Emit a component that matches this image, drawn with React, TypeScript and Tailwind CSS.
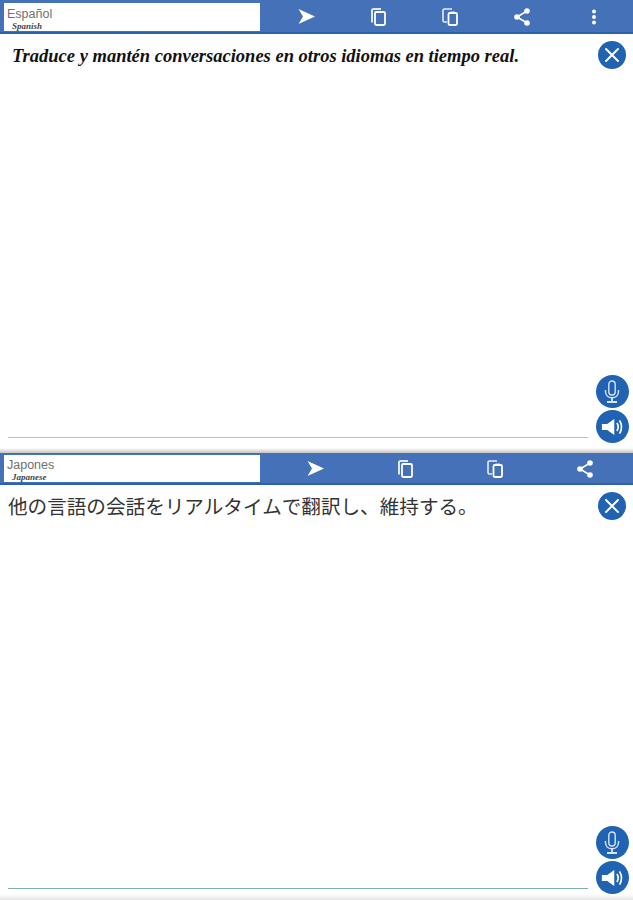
const BLUE = "bg-[#4471b7]";

function SendIcon() {
  return (
    <svg width="17" height="15" viewBox="0 0 17 15" fill="#fff">
      <path d="M0.5 0 L17 7.5 L0.5 15 L5 7.5 Z" />
    </svg>
  );
}

function CopyIcon() {
  return (
    <svg width="16" height="18" viewBox="0 0 16 18" fill="none">
      <path d="M2 14.5 V2.5 C2 1.6 2.6 1 3.5 1 H11" stroke="#dfe8f5" strokeWidth="2" />
      <rect x="5" y="4" width="10" height="13" rx="1.2" stroke="#fff" strokeWidth="1.8" />
    </svg>
  );
}

function PasteIcon() {
  return (
    <svg width="16" height="18" viewBox="0 0 16 18" fill="none">
      <path d="M10 1 H2.5 C1.6 1 1 1.6 1 2.5 V12.5 C1 13.4 1.6 14 2.5 14 H5" stroke="#e6edf7" strokeWidth="1.6" />
      <rect x="6.5" y="5" width="8.5" height="12" rx="1.2" stroke="#fff" strokeWidth="1.8" />
      <rect x="8.5" y="3.6" width="4.5" height="2.4" fill="#fff" />
    </svg>
  );
}

function ShareIcon() {
  return (
    <svg width="16" height="18" viewBox="0 0 16 18" fill="#fff">
      <path d="M13 3 L3 9 L13 15" fill="none" stroke="#fff" strokeWidth="1.6" />
      <circle cx="13" cy="3" r="2.8" />
      <circle cx="3" cy="9" r="2.8" />
      <circle cx="13" cy="15" r="2.8" />
    </svg>
  );
}

function DotsIcon() {
  return (
    <svg width="6" height="16" viewBox="0 0 6 16" fill="#fff">
      <circle cx="3" cy="2.5" r="2" />
      <circle cx="3" cy="8" r="2" />
      <circle cx="3" cy="13.5" r="2" />
    </svg>
  );
}

function CloseButton() {
  return (
    <div className="flex size-[28px] items-center justify-center rounded-full bg-[#1f63b2]">
      <svg width="16" height="16" viewBox="0 0 16 16">
        <path d="M2 2 L14 14 M14 2 L2 14" stroke="#fff" strokeWidth="2" strokeLinecap="round" />
      </svg>
    </div>
  );
}

function MicButton() {
  return (
    <div className="flex size-[33px] items-center justify-center rounded-full bg-[#1f63b2]">
      <svg width="18" height="24" viewBox="0 0 18 24" fill="none" stroke="#d9e5f4">
        <rect x="5.8" y="1" width="6.4" height="14" rx="3.2" strokeWidth="1.4" />
        <path d="M2.5 10 V11.5 C2.5 15.5 5.5 17.8 9 17.8 C12.5 17.8 15.5 15.5 15.5 11.5 V10" strokeWidth="1.4" />
        <path d="M9 18 V21.5 M4 22 H14" strokeWidth="1.8" />
      </svg>
    </div>
  );
}

function SpeakerButton() {
  return (
    <div className="flex size-[33px] items-center justify-center rounded-full bg-[#1f63b2]">
      <svg width="23" height="22" viewBox="0 0 26 24" fill="none">
        <path d="M1 8.5 H7 L15 3 V21 L7 15.5 H1 Z" fill="#fff" />
        <path d="M18 7.5 C19.6 10 19.6 14 18 16.5" stroke="#fff" strokeWidth="1.9" />
        <path d="M21 4.5 C23.6 9 23.6 15 21 19.5" stroke="#fff" strokeWidth="1.9" />
      </svg>
    </div>
  );
}

function Toolbar({
  label,
  sub,
  icons,
  barClass,
  inputClass,
  labelClass,
  itemWidth,
}: {
  label: string;
  sub: string;
  icons: React.ReactNode[];
  barClass: string;
  inputClass: string;
  labelClass: string;
  itemWidth: string;
}) {
  return (
    <div className={`flex shrink-0 items-center border-b-2 border-[#2a62ae] ${BLUE} ${barClass}`}>
      <div className={`ml-[4px] flex w-[256px] shrink-0 flex-col bg-white pl-[3px] font-['Liberation_Sans',sans-serif] text-[12.5px] leading-[13px] font-medium text-[#707070] ${inputClass}`}>
        <span className={labelClass}>{label}</span>
        <span className="ml-[5px] font-['Liberation_Serif',serif] text-[9px] leading-[10px] font-bold text-[#444] italic">
          {sub}
        </span>
      </div>
      <div className="flex pt-[1px] pl-[10px]">
        {icons.map((icon, i) => (
          <div key={i} className={`flex items-center justify-center ${itemWidth}`}>
            {icon}
          </div>
        ))}
      </div>
    </div>
  );
}

function Body({ children, lineColor }: { children: React.ReactNode; lineColor: string }) {
  return (
    <div className="flex min-h-0 flex-1 bg-white">
      <div className="flex min-w-0 flex-1 flex-col pl-[8px]">
        <div className="flex-1 pt-[9px]">{children}</div>
        <div className={`mb-[5px] h-[1px] w-[580px] ${lineColor}`} />
      </div>
      <div className="flex w-[42px] shrink-0 flex-col items-center pt-[7px]">
        <CloseButton />
        <div className="mt-auto flex flex-col items-center gap-[2px]">
          <MicButton />
          <SpeakerButton />
        </div>
      </div>
    </div>
  );
}

export default function App() {
  return (
    <div className="h-[900px] w-[633px] overflow-hidden bg-white">
      <div className="flex h-[443px] flex-col">
        <Toolbar
          label="Español"
          sub="Spanish"
          barClass="h-[34px]"
          inputClass="mt-[2px] h-[28px]"
          labelClass="mt-[5px]"
          itemWidth="w-[72px]"
          icons={[<SendIcon />, <CopyIcon />, <PasteIcon />, <ShareIcon />, <DotsIcon />]}
        />
        <Body lineColor="bg-[#bdbdbd]">
          <p className="pl-[4px] font-['Liberation_Serif',serif] text-[18.5px] leading-[26px] font-bold whitespace-nowrap text-[#111] italic">
            Traduce y mantén conversaciones en otros idiomas en tiempo real.
          </p>
        </Body>
      </div>
      <div className="h-[10px] bg-gradient-to-b from-white via-white to-[#c4c4c4]" />
      <div className="flex h-[441px] flex-col">
        <Toolbar
          label="Japones"
          sub="Japanese"
          barClass="h-[32px]"
          inputClass="h-[27px]"
          labelClass="mt-[4px]"
          itemWidth="w-[90px]"
          icons={[<SendIcon />, <CopyIcon />, <PasteIcon />, <ShareIcon />]}
        />
        <Body lineColor="bg-[#7fb3a0]">
          <p className="font-['Noto_Sans_CJK_JP',sans-serif] text-[19.6px] leading-[24px] whitespace-nowrap text-[#333]">
            他の言語の会話をリアルタイムで翻訳し、維持する。
          </p>
        </Body>
      </div>
      <div className="h-[6px] bg-gradient-to-b from-white to-[#e6e6e6]" />
    </div>
  );
}
